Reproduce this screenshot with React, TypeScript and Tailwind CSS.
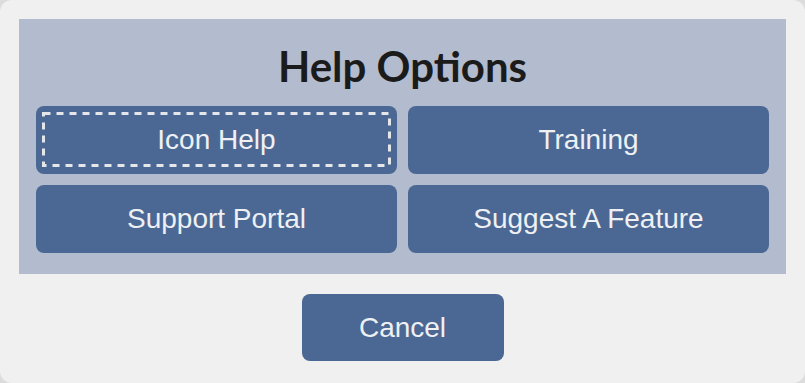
import React from 'react';

const options = ['Icon Help', 'Training', 'Support Portal', 'Suggest A Feature'];

// dashed focus ring drawn on the focused option
const FocusRing: React.FC = () => (
  <svg
    className="absolute left-[6px] top-[6px] pointer-events-none"
    width="349"
    height="55"
    viewBox="0 0 349 55"
  >
    <rect
      x="1.5"
      y="1.5"
      width="346"
      height="52"
      fill="none"
      stroke="#e4e6ea"
      strokeWidth="3"
      strokeDasharray="7 6"
    />
  </svg>
);

const App: React.FC = () => {
  return (
    <div className="w-[805px] h-[383px] bg-[#dcdcdc]">
      <div className="w-full h-full rounded-[12px] bg-[#f0f0f0] pt-[19px] flex flex-col items-center">
        {/* Options panel */}
        <div className="w-[767px] bg-[#b3bccf] pt-[22px] pb-[21px] px-[17px]">
          <h1
            className="h-[50px] leading-[50px] mb-[15px] text-center text-[42px] font-bold text-[#1b1b1b]"
            style={{ fontFamily: 'Lato, "Open Sans", sans-serif' }}
          >
            Help Options
          </h1>
          <div className="grid grid-cols-2 gap-[11px]">
            {options.map((label, i) => (
              <button
                key={label}
                className="relative h-[68px] rounded-[8px] bg-[#4b6894] text-[28px] text-[#eef0f3] flex items-center justify-center"
                style={{ fontFamily: '"Liberation Sans", Arial, sans-serif' }}
              >
                {i === 0 && <FocusRing />}
                {label}
              </button>
            ))}
          </div>
        </div>

        <button
          className="mt-[20px] w-[202px] h-[67px] rounded-[8px] bg-[#4b6894] text-[28px] text-[#eef0f3] flex items-center justify-center"
          style={{ fontFamily: '"Liberation Sans", Arial, sans-serif' }}
        >
          Cancel
        </button>
      </div>
    </div>
  );
};

export default App;
